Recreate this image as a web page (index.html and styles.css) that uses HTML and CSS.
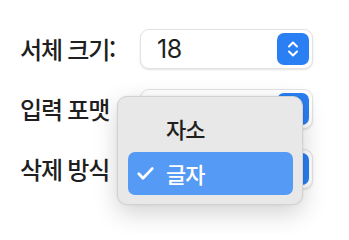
FILE: index.html
```html
<!DOCTYPE html>
<html lang="ko">
<head>
<meta charset="utf-8">
<link rel="stylesheet" href="styles.css">
</head>
<body>
<div class="form">
  <div class="row">
    <div class="label">서체 크기:</div>
    <div class="popup">
      <span class="value">18</span>
      <span class="stepper">
        <svg width="14" height="20" viewBox="0 0 14 20"><path d="M3 7.5 L7 3.5 L11 7.5 M3 12.5 L7 16.5 L11 12.5" fill="none" stroke="#fff" stroke-width="2" stroke-linecap="round" stroke-linejoin="round"/></svg>
      </span>
    </div>
  </div>
  <div class="row">
    <div class="label">입력 포맷</div>
    <div class="popup">
      <span class="value">한글 자모</span>
      <span class="stepper"></span>
    </div>
  </div>
  <div class="row">
    <div class="label">삭제 방식</div>
    <div class="popup">
      <span class="value">글자</span>
      <span class="stepper"></span>
    </div>
  </div>
</div>
<div class="menu">
  <div class="item"><span class="check"></span><span class="text">자소</span></div>
  <div class="item selected"><span class="check"><svg width="17" height="13" viewBox="0 0 17 13"><path d="M1.8 6.8 L6 11.2 L15.2 1.6" fill="none" stroke="#fff" stroke-width="2.8" stroke-linecap="round" stroke-linejoin="round"/></svg></span><span class="text">글자</span></div>
</div>
</body>
</html>
```

FILE: styles.css
```css
html, body {
  margin: 0;
  padding: 0;
  background: #ffffff;
}
body {
  width: 349px;
  height: 234px;
  overflow: hidden;
  position: relative;
  font-family: "Noto Sans CJK KR", "Noto Sans", sans-serif;
  color: #1f1f1f;
}
.form {
  padding: 29px 0 0 20px;
  display: flex;
  flex-direction: column;
  gap: 20px;
}
.row {
  display: flex;
  align-items: center;
  height: 40px;
}
.label {
  width: 120px;
  font-size: 24px;
  font-weight: 500;
  letter-spacing: -1.2px;
  line-height: 40px;
  white-space: nowrap;
}
.popup {
  box-sizing: border-box;
  width: 173px;
  height: 40px;
  border-radius: 9px;
  background: #fff;
  border: 1px solid #e3e3e3;
  box-shadow: 0 1px 2px rgba(0,0,0,0.12);
  display: flex;
  align-items: center;
  justify-content: space-between;
  padding: 0 3px 0 16px;
}
.value {
  font-family: "Inter", "Noto Sans CJK KR", sans-serif;
  font-size: 25px;
  letter-spacing: -0.5px;
  color: #1e1e1e;
}
.stepper {
  width: 32px;
  height: 32px;
  border-radius: 7px;
  background: #2a7ff2;
  display: flex;
  align-items: center;
  justify-content: center;
}
.menu {
  position: absolute;
  left: 117px;
  top: 96px;
  box-sizing: border-box;
  width: 186px;
  height: 109px;
  padding: 9px 9px 9px 10px;
  background: #e8e8e8;
  border: 1px solid #d2d2d2;
  border-radius: 10px;
  box-shadow: 0 8px 24px rgba(0,0,0,0.18), 0 0 2px rgba(0,0,0,0.1);
  display: flex;
  flex-direction: column;
  gap: 2px;
}
.item {
  height: 44px;
  border-radius: 7px;
  display: flex;
  align-items: center;
  padding-left: 9px;
  gap: 12px;
  font-size: 22px;
  font-weight: 500;
  letter-spacing: -1px;
  color: #1f1f1f;
}
.item.selected {
  background: #559af4;
  color: #fff;
}
.check {
  width: 17px;
  height: 13px;
  display: flex;
}
```
